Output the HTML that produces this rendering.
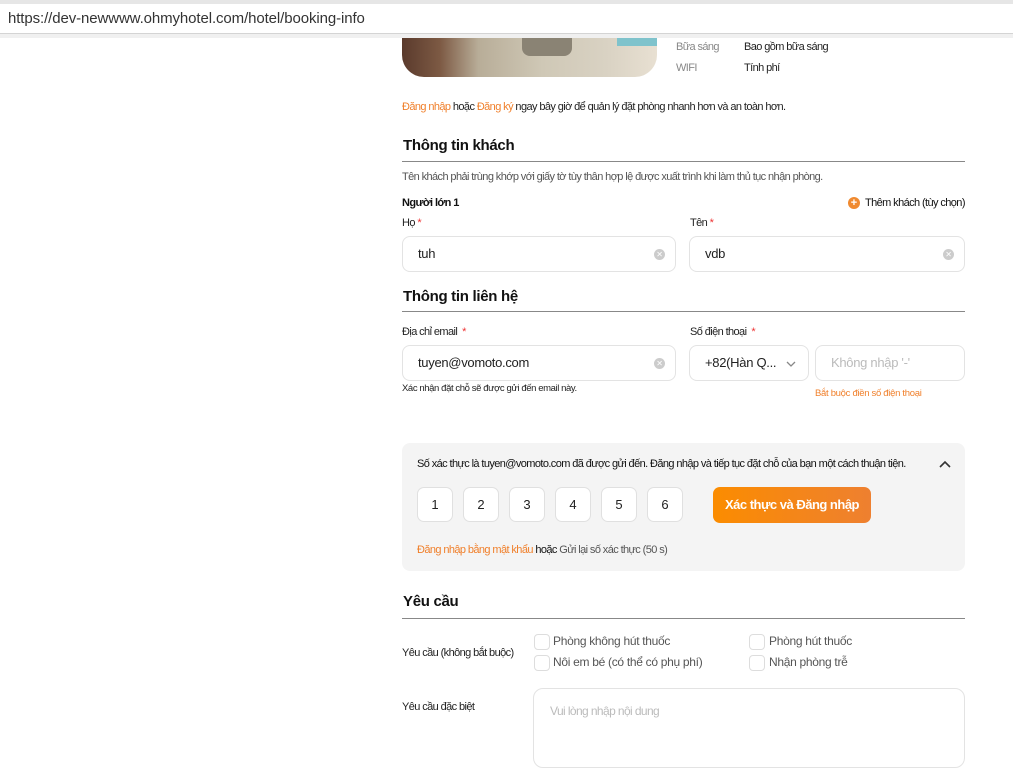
<!DOCTYPE html><html><head><meta charset="utf-8"><style>
*{margin:0;padding:0;box-sizing:border-box}
body{width:1013px;height:752px;overflow:hidden;background:#fff;font-family:"Liberation Sans",Arial,sans-serif;color:#222;position:relative}
.a{position:absolute;white-space:nowrap}
.s{font-size:11px;letter-spacing:-0.6px}
.h{font-size:15px;font-weight:bold;letter-spacing:-0.3px;color:#111}
.ln{position:absolute;left:402px;width:563px;height:1px;background:#888}
.in{position:absolute;border:1px solid #e3e3e3;border-radius:8px;background:#fff;font-size:13px;letter-spacing:-0.3px}
.in span{position:absolute;left:15px;top:9px}
.x{position:absolute;right:10px;top:12px;width:11px;height:11px;border-radius:50%;background:#ccc;color:#fff;font-size:8px;line-height:11px;text-align:center}
.o{color:#f07f2a}
.r{color:#e33}
.cb{position:absolute;width:16px;height:16px;border:1px solid #ddd;border-radius:4px;background:#fff}
.cl{position:absolute;font-size:12px;color:#555;letter-spacing:-0.3px;white-space:nowrap}
.cd{position:absolute;top:487px;width:36px;height:35px;border:1px solid #e0e0e0;border-radius:7px;background:#fff;font-size:13px;text-align:center;line-height:33px}
</style></head><body>
<div class="a" style="left:0;top:0;width:1013px;height:4px;background:#e6e6e6"></div>
<div class="a" style="left:0;top:4px;width:1013px;height:30px;background:#fff;border-bottom:1px solid #d4d4d4"></div>
<div class="a" style="left:0;top:34px;width:1013px;height:4px;background:#f0f0f0"></div>
<div class="a" style="left:8px;top:10px;font-size:15px;color:#333;letter-spacing:-0.1px">https://dev-newwww.ohmyhotel.com/hotel/booking-info</div>
<div class="a" style="left:402px;top:38px;width:255px;height:39px;border-radius:0 0 22px 22px;overflow:hidden;background:linear-gradient(90deg,#5a3a2c 0%,#7d5a44 15%,#b8ad98 30%,#cfc8b6 55%,#d9d2c3 80%,#e8e0d2 100%)">
<div style="position:absolute;left:120px;top:0;width:50px;height:18px;background:#8a8374;border-radius:0 0 8px 8px"></div>
<div style="position:absolute;left:215px;top:0;width:40px;height:8px;background:#7fc3cc"></div></div>
<div class="a s" style="left:676px;top:41px;color:#888">Bữa sáng</div>
<div class="a s" style="left:744px;top:41px">Bao gồm bữa sáng</div>
<div class="a s" style="left:676px;top:62px;color:#888">WIFI</div>
<div class="a s" style="left:744px;top:62px">Tính phí</div>
<div class="a s" style="left:402px;top:101px"><span class="o">Đăng nhập</span> hoặc <span class="o">Đăng ký</span> ngay bây giờ để quản lý đặt phòng nhanh hơn và an toàn hơn.</div>
<div class="a h" style="left:403px;top:137px">Thông tin khách</div>
<div class="ln" style="top:161px"></div>
<div class="a s" style="left:402px;top:171px;color:#555">Tên khách phải trùng khớp với giấy tờ tùy thân hợp lệ được xuất trình khi làm thủ tục nhận phòng.</div>
<div class="a s" style="left:402px;top:197px;font-weight:bold;color:#111">Người lớn 1</div>
<div class="a" style="left:848px;top:197px;width:12px;height:12px;border-radius:50%;background:#f08a30;color:#fff;font-size:11px;line-height:12px;text-align:center;font-weight:bold">+</div>
<div class="a s" style="left:865px;top:197px;color:#111">Thêm khách (tùy chọn)</div>
<div class="a s" style="left:402px;top:217px">Họ <span class="r">*</span></div>
<div class="a s" style="left:690px;top:217px">Tên <span class="r">*</span></div>
<div class="in" style="left:402px;top:236px;width:274px;height:36px"><span>tuh</span><div class="x">✕</div></div>
<div class="in" style="left:689px;top:236px;width:276px;height:36px"><span>vdb</span><div class="x">✕</div></div>
<div class="a h" style="left:403px;top:288px">Thông tin liên hệ</div>
<div class="ln" style="top:311px"></div>
<div class="a s" style="left:402px;top:326px">Địa chỉ email &nbsp;<span class="r">*</span></div>
<div class="a s" style="left:690px;top:326px">Số điện thoại &nbsp;<span class="r">*</span></div>
<div class="in" style="left:402px;top:345px;width:274px;height:36px"><span>tuyen@vomoto.com</span><div class="x">✕</div></div>
<div class="in" style="left:689px;top:345px;width:120px;height:36px"><span>+82(Hàn Q...</span><svg style="position:absolute;left:96px;top:15px" width="10" height="6"><path d="M1 1l4 4 4-4" stroke="#888" fill="none" stroke-width="1.3"/></svg></div>
<div class="in" style="left:815px;top:345px;width:150px;height:36px;color:#bbb"><span>Không nhập '-'</span></div>
<div class="a" style="left:402px;top:383px;font-size:9.5px;letter-spacing:-0.4px">Xác nhận đặt chỗ sẽ được gửi đến email này.</div>
<div class="a o" style="left:815px;top:388px;font-size:9.5px;letter-spacing:-0.3px">Bắt buộc điền số điện thoại</div>
<div class="a" style="left:402px;top:443px;width:563px;height:128px;background:#f4f4f4;border-radius:8px"></div>
<div class="a s" style="left:417px;top:458px;color:#111">Số xác thực là tuyen@vomoto.com đã được gửi đến. Đăng nhập và tiếp tục đặt chỗ của bạn một cách thuận tiện.</div>
<svg class="a" style="left:939px;top:460px" width="12" height="8"><path d="M1 7l5-5 5 5" stroke="#333" fill="none" stroke-width="1.6"/></svg>
<div class="cd" style="left:417px">1</div><div class="cd" style="left:463px">2</div><div class="cd" style="left:509px">3</div><div class="cd" style="left:555px">4</div><div class="cd" style="left:601px">5</div><div class="cd" style="left:647px">6</div>
<div class="a" style="left:713px;top:487px;width:158px;height:36px;border-radius:7px;background:linear-gradient(90deg,#fb8c00,#ee8030);color:#fff;font-size:13px;font-weight:bold;text-align:center;line-height:36px;letter-spacing:-0.5px">Xác thực và Đăng nhập</div>
<div class="a s" style="left:417px;top:544px;color:#555"><span class="o">Đăng nhập bằng mật khẩu</span> <span style="color:#111">hoặc</span> Gửi lại số xác thực (50 s)</div>
<div class="a h" style="left:403px;top:593px">Yêu cầu</div>
<div class="ln" style="top:618px"></div>
<div class="a s" style="left:402px;top:647px">Yêu cầu (không bắt buộc)</div>
<div class="cb" style="left:534px;top:634px"></div><div class="cl" style="left:553px;top:634px">Phòng không hút thuốc</div>
<div class="cb" style="left:749px;top:634px"></div><div class="cl" style="left:769px;top:634px">Phòng hút thuốc</div>
<div class="cb" style="left:534px;top:655px"></div><div class="cl" style="left:553px;top:655px">Nôi em bé (có thể có phụ phí)</div>
<div class="cb" style="left:749px;top:655px"></div><div class="cl" style="left:769px;top:655px">Nhận phòng trễ</div>
<div class="a s" style="left:402px;top:701px">Yêu cầu đặc biệt</div>
<div class="a" style="left:533px;top:688px;width:432px;height:80px;border:1px solid #e3e3e3;border-radius:10px"></div>
<div class="a s" style="left:550px;top:704px;color:#bbb;font-size:12px">Vui lòng nhập nội dung</div>
</body></html>
